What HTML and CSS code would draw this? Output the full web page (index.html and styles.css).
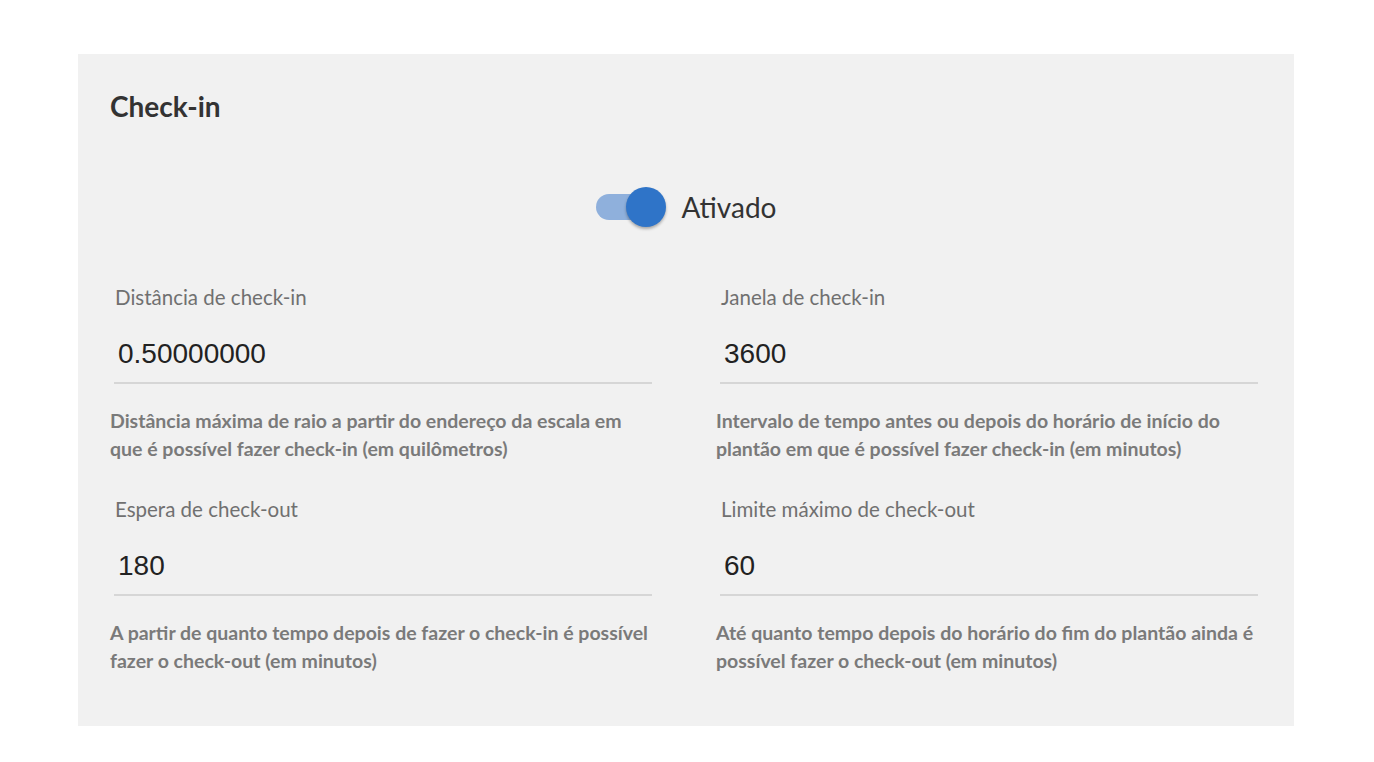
FILE: index.html
```html
<!DOCTYPE html>
<html lang="pt-BR">
<head>
  <meta charset="UTF-8">
  <title>Check-in</title>
  <link rel="stylesheet" href="styles.css">
</head>
<body>

  <section class="panel">
    <h2 class="panel-title">Check-in</h2>

    <!-- ativar / desativar -->
    <label class="switch-row">
      <span class="switch">
        <span class="track"></span>
        <span class="knob"></span>
      </span>
      <span class="switch-label">Ativado</span>
    </label>

    <div class="fields">
      <div class="field">
        <label class="field-label" for="distancia">Distância de check-in</label>
        <input class="field-input" type="text" id="distancia" value="0.50000000">
        <p class="field-help">Distância máxima de raio a partir do endereço da escala em que é possível fazer check-in (em quilômetros)</p>
      </div>

      <div class="field">
        <label class="field-label" for="janela">Janela de check-in</label>
        <input class="field-input" type="text" id="janela" value="3600">
        <p class="field-help">Intervalo de tempo antes ou depois do horário de início do plantão em que é possível fazer check-in (em minutos)</p>
      </div>

      <div class="field">
        <label class="field-label" for="espera">Espera de check-out</label>
        <input class="field-input" type="text" id="espera" value="180">
        <p class="field-help">A partir de quanto tempo depois de fazer o check-in é possível fazer o check-out (em minutos)</p>
      </div>

      <div class="field">
        <label class="field-label" for="limite">Limite máximo de check-out</label>
        <input class="field-input" type="text" id="limite" value="60">
        <p class="field-help">Até quanto tempo depois do horário do fim do plantão ainda é possível fazer o check-out (em minutos)</p>
      </div>
    </div>
  </section>

</body>
</html>
```

FILE: styles.css
```css
body {
  margin: 0;
  padding: 0;
  background-color: #fff;
  font-family: Lato, "Open Sans", sans-serif;
}

.panel {
  box-sizing: border-box;
  width: 1216px;
  height: 672px;
  margin: 54px 0 0 78px;
  padding: 36px 32px 0 32px;
  background-color: #f1f1f1;
}

.panel-title {
  margin: 0;
  font-size: 28px;
  line-height: 32px;
  font-weight: bold;
  color: #333;
}

.switch-row {
  display: flex;
  justify-content: center;
  align-items: center;
  gap: 16px;
  margin-top: 65px;
  cursor: pointer;
}

.switch {
  position: relative;
  display: block;
  width: 70px;
  height: 40px;
}

.switch .track {
  position: absolute;
  left: 0;
  top: 7px;
  width: 64px;
  height: 26px;
  border-radius: 13px;
  background-color: #8fb0dc;
}

.switch .knob {
  position: absolute;
  left: 30px;
  top: 0;
  width: 40px;
  height: 40px;
  border-radius: 50%;
  background-color: #2f74c8;
  box-shadow: 0 2px 3px rgba(0, 0, 0, 0.3);
}

.switch-label {
  font-size: 28px;
  line-height: 40px;
  color: #333;
}

.fields {
  display: grid;
  grid-template-columns: 1fr 1fr;
  column-gap: 60px;
  row-gap: 34px;
  margin-top: 58px;
}

.field {
  display: flex;
  flex-direction: column;
}

.field-label {
  padding-left: 5px;
  font-size: 20.5px;
  line-height: 24px;
  color: #707070;
}

.field-input {
  box-sizing: border-box;
  width: 538px;
  margin: 29px 0 0 4px;
  padding: 0 4px 12px 4px;
  border: none;
  border-bottom: 2px solid #d6d6d6;
  background: transparent;
  font-family: "Liberation Sans", Arial, sans-serif;
  font-size: 28px;
  line-height: 32px;
  color: #222;
  outline: none;
}

.field-help {
  margin: 23px 0 0 0;
  font-size: 19.5px;
  line-height: 28px;
  font-weight: bold;
  color: #7a7a7a;
}
```
